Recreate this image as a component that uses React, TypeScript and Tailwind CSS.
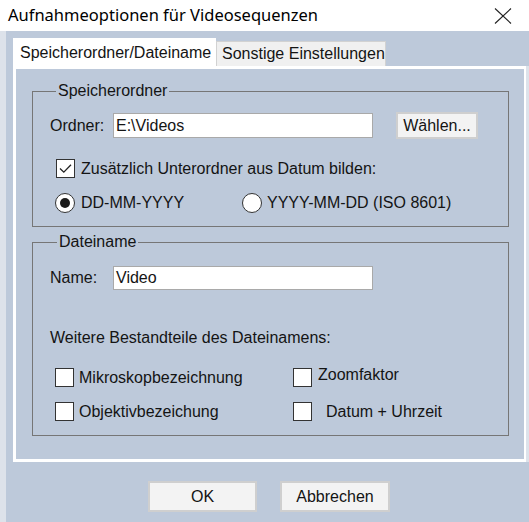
import React from "react";

function CheckBox({ checked = false }: { checked?: boolean }) {
  return (
    <span className="w-[19px] h-[19px] shrink-0 bg-white border border-[#333333] flex items-center justify-center">
      {checked && (
        <svg width="15" height="15" viewBox="0 0 15 15">
          <path d="M2 7.5 L5.8 11.2 L13 3.8" fill="none" stroke="#222" strokeWidth="1.3" />
        </svg>
      )}
    </span>
  );
}

function Radio({ checked = false }: { checked?: boolean }) {
  return (
    <span className="w-[20px] h-[20px] shrink-0 rounded-full bg-white border border-[#333333] flex items-center justify-center">
      {checked && <span className="w-[10px] h-[10px] rounded-full bg-[#1a1a1a]" />}
    </span>
  );
}

function Button({ children, className = "" }: { children: React.ReactNode; className?: string }) {
  return (
    <button
      className={`shrink-0 bg-[#f3f3f3] border-2 border-[#cfcfcf] flex items-center justify-center text-[#141414] ${className}`}
    >
      {children}
    </button>
  );
}

export default function App() {
  return (
    <div className="w-[529px] h-[522px] bg-white flex flex-col overflow-hidden font-['Liberation_Sans',Arial,sans-serif] text-[16px] leading-[18px] text-[#141414]">
      {/* Title bar */}
      <div className="h-[31px] shrink-0 flex items-center justify-between pl-[8px] pr-[17px]">
        <span className="font-['Noto_Sans',sans-serif] text-[16.5px] text-black pb-[1px]">
          Aufnahmeoptionen für Videosequenzen
        </span>
        <svg width="18" height="16" viewBox="0 0 18 16" className="mt-[1px]">
          <path d="M1 0.5 L17 15.5 M17 0.5 L1 15.5" stroke="#222" strokeWidth="1.1" fill="none" />
        </svg>
      </div>

      <div className="flex-1 bg-[#bdc9da] border-l-[6px] border-[#dde2ea] flex flex-col pt-[7px] pl-[7px]">
        {/* Tabs */}
        <div className="h-[28px] shrink-0 flex items-end">
          <div className="w-[203px] h-[28px] bg-white flex items-center pl-[7px] pt-[2px]">
            Speicherordner/Dateiname
          </div>
          <div className="w-[170px] h-[25px] bg-[#f0f0f0] border border-b-0 border-[#d2d2d2] flex items-center pl-[5px]">
            Sonstige Einstellungen
          </div>
        </div>

        {/* Tab panel */}
        <div className="bg-[#dde2ea] pr-[3px]">
          <div className="bg-[#bdc9da] border-[3px] border-r-2 border-white flex flex-col pl-[16px] pb-[23px]">
            <fieldset className="w-[477px] mt-[13px] border border-[#767676] pl-[17px] pt-[12px] pb-[13px] flex flex-col">
              <legend className="ml-[6px] px-[2px] leading-[18px]">Speicherordner</legend>
              <div className="flex items-center h-[27px]">
                <span className="w-[63px]">Ordner:</span>
                <div className="w-[260px] h-[25px] bg-white border border-[#a9a9a9] flex items-center pl-[2px]">
                  E:\Videos
                </div>
                <Button className="ml-[23px] w-[82px] h-[27px]">Wählen...</Button>
              </div>
              <div className="flex items-center mt-[20px] ml-[6px] h-[19px]">
                <CheckBox checked />
                <span className="ml-[6px]">Zusätzlich Unterordner aus Datum bilden:</span>
              </div>
              <div className="flex items-center mt-[15px] ml-[5px] h-[20px]">
                <div className="w-[187px] flex items-center">
                  <Radio checked />
                  <span className="ml-[6px]">DD-MM-YYYY</span>
                </div>
                <div className="flex items-center">
                  <Radio />
                  <span className="ml-[5px]">YYYY-MM-DD (ISO 8601)</span>
                </div>
              </div>
            </fieldset>

            <fieldset className="w-[477px] mt-[6px] border border-[#767676] pl-[17px] pt-[15px] pb-[14px] flex flex-col">
              <legend className="ml-[7px] px-[2px] leading-[18px]">Dateiname</legend>
              <div className="flex items-center h-[24px]">
                <span className="w-[63px]">Name:</span>
                <div className="w-[260px] h-[24px] bg-white border border-[#a9a9a9] flex items-center pl-[2px]">
                  Video
                </div>
              </div>
              <div className="mt-[39px]">Weitere Bestandteile des Dateinamens:</div>
              <div className="mt-[21px] ml-[5px] grid grid-cols-[238px_1fr] gap-y-[15px]">
                <div className="flex items-center h-[19px]">
                  <CheckBox />
                  <span className="ml-[5px]">Mikroskopbezeichnung</span>
                </div>
                <div className="flex items-start h-[19px]">
                  <CheckBox />
                  <span className="ml-[6px] -mt-[2px]">Zoomfaktor</span>
                </div>
                <div className="flex items-center h-[19px]">
                  <CheckBox />
                  <span className="ml-[5px]">Objektivbezeichung</span>
                </div>
                <div className="flex items-center h-[19px]">
                  <CheckBox />
                  <span className="ml-[14px]">Datum + Uhrzeit</span>
                </div>
              </div>
            </fieldset>
          </div>
        </div>

        {/* Dialog buttons */}
        <div className="flex mt-[19px] ml-[135px] gap-[23px]">
          <Button className="w-[109px] h-[31px]">OK</Button>
          <Button className="w-[110px] h-[31px]">Abbrechen</Button>
        </div>
      </div>
    </div>
  );
}
